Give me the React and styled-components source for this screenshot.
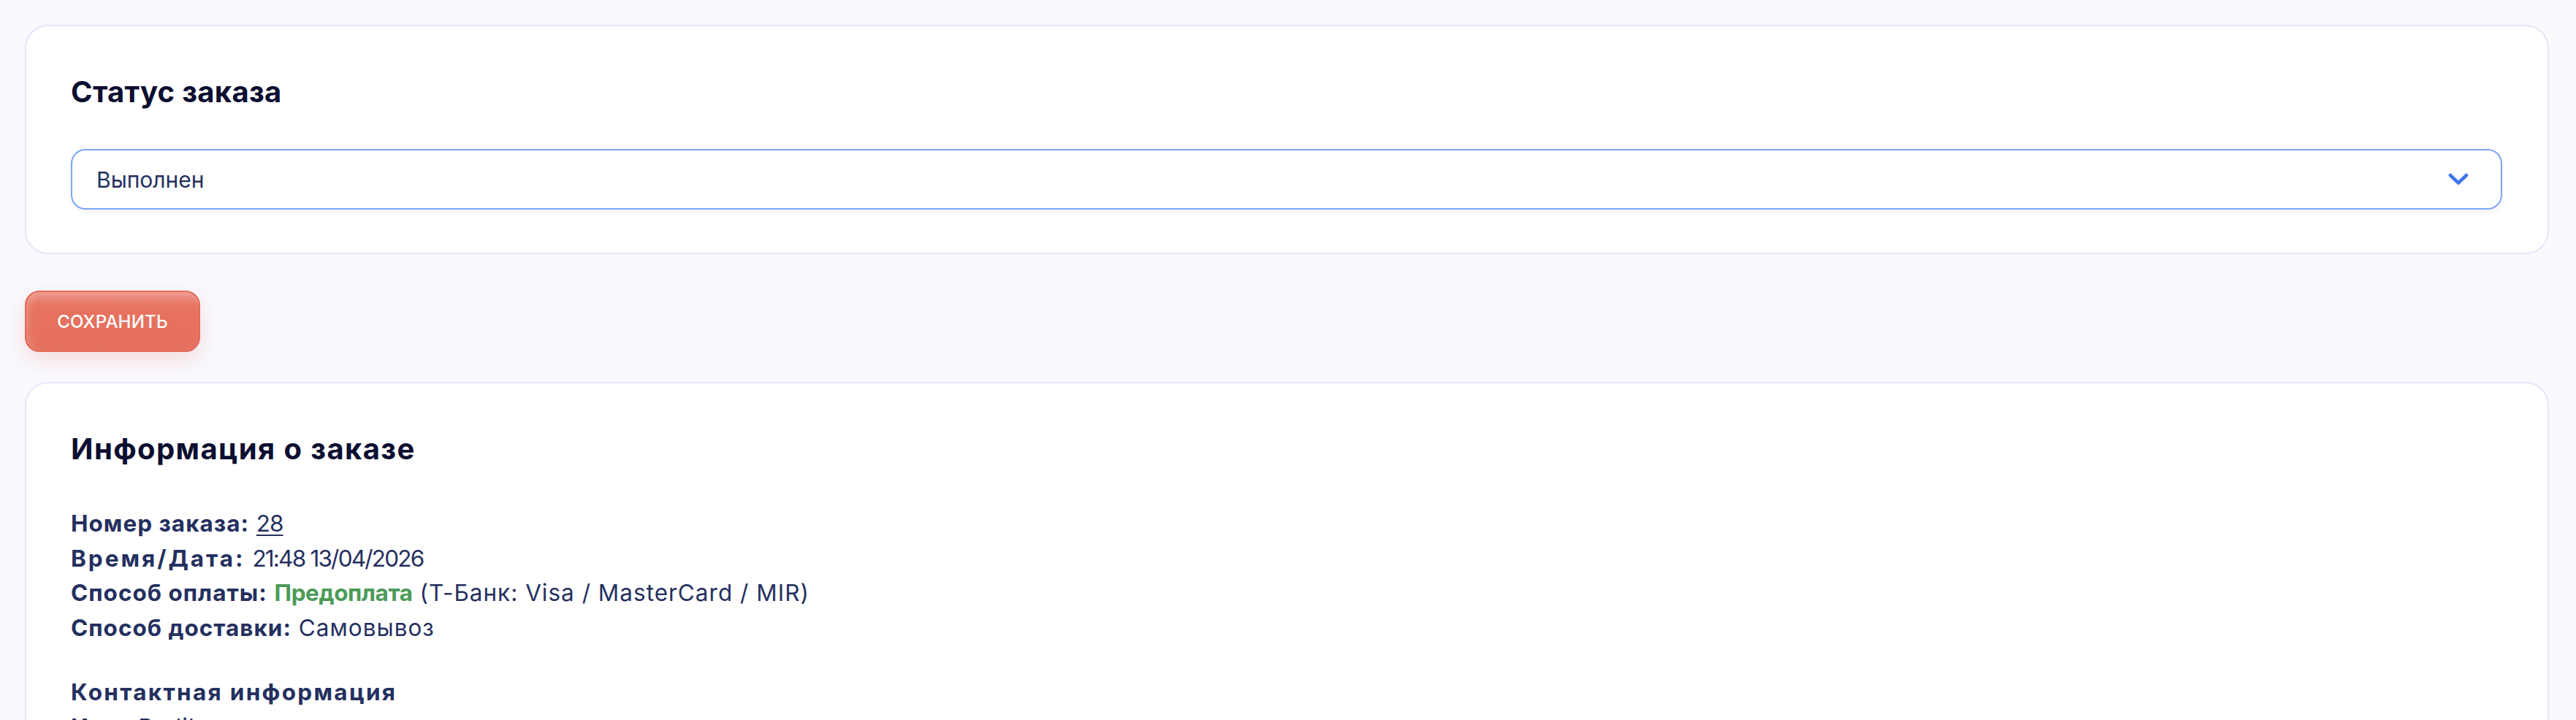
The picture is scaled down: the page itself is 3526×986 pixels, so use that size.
import React from 'react'
import styled, { createGlobalStyle } from 'styled-components'

const GlobalStyle = createGlobalStyle`
  html, body {
    margin: 0;
    padding: 0;
    background: #f9f9fe;
    font-family: Inter, "Open Sans", "DejaVu Sans", sans-serif;
    color: #25305f;
  }
  * { box-sizing: border-box; }
`

const Page = styled.div`
  padding: 34px 37px 0 34px;
  display: flex;
  flex-direction: column;
  align-items: flex-start;
`

const Card = styled.section`
  width: 100%;
  background: #fff;
  border: 2px solid #e4e6fb;
  border-radius: 32px;
  padding: 66px 62px 59px 61px;
`

const Title = styled.h2`
  margin: 0;
  font-size: 40px;
  line-height: 48px;
  font-weight: 700;
  letter-spacing: ${p => p.$spacing || '0.6px'};
  color: #0c0e30;
`

const SelectBox = styled.div`
  margin-top: 54px;
  height: 83px;
  border: 2px solid #7ea5f2;
  border-radius: 20px;
  box-shadow: 0 3px 6px rgba(30, 40, 90, 0.06);
  display: flex;
  align-items: center;
  justify-content: space-between;
  padding: 0 44px 0 33px;
  font-size: 30px;
  line-height: 36px;
  color: #25305f;
`

const Chevron = () => (
  <svg width="28" height="17" viewBox="0 0 28 17" fill="none">
    <path d="M3 3 L14 13.5 L25 3" stroke="#3f74e9" strokeWidth="4.6" strokeLinecap="round" strokeLinejoin="round" />
  </svg>
)

const SaveButton = styled.button`
  margin: 50px 0 41px;
  width: 240px;
  height: 84px;
  border-radius: 20px;
  border: 2px solid #e36b5a;
  background: linear-gradient(180deg, #ec8e80 0%, #e6725f 28%, #e5705e 100%);
  box-shadow: inset 4px 4px 10px rgba(255, 255, 255, 0.18), 0 10px 28px rgba(229, 112, 95, 0.22);
  color: #fff;
  font-family: inherit;
  font-size: 24px;
  line-height: 29px;
  font-weight: 500;
  letter-spacing: 0.2px;
  text-transform: uppercase;
  padding: 0;
  cursor: pointer;
`

const InfoList = styled.div`
  margin-top: 54px;
  font-size: 31.5px;
  line-height: 47.5px;
  letter-spacing: 1px;
  color: #25305f;
`

const Line = styled.div`
  white-space: nowrap;
`

const Label = styled.b`
  font-weight: 700;
  letter-spacing: ${p => p.$spacing || '1px'};
`

const Digits = styled.span`
  letter-spacing: -1.8px;
`

const Num = styled.a`
  color: inherit;
  letter-spacing: -1px;
  text-decoration: underline;
  text-underline-offset: 4px;
  text-decoration-thickness: 2px;
`

const Paid = styled.b`
  font-weight: 700;
  letter-spacing: -0.4px;
  color: #4b9b57;
`

const SubHeading = styled.div`
  margin-top: 41px;
  font-weight: 700;
  letter-spacing: 2.3px;
`

export default function App() {
  return (
    <>
      <GlobalStyle />
      <Page>
        <Card>
          <Title $spacing="0.3px">Статус заказа</Title>
          <SelectBox>
            <span>Выполнен</span>
            <Chevron />
          </SelectBox>
        </Card>

        <SaveButton>Сохранить</SaveButton>

        <Card>
          <Title $spacing="1.4px">Информация о заказе</Title>
          <InfoList>
            <Line><Label>Номер заказа:</Label> <Num href="#">28</Num></Line>
            <Line><Label $spacing="3px">Время/Дата:</Label> <Digits>21:48 13/04/2026</Digits></Line>
            <Line><Label>Способ оплаты:</Label> <Paid>Предоплата</Paid> (Т-Банк: Visa / MasterCard / MIR)</Line>
            <Line><Label>Способ доставки:</Label> Самовывоз</Line>
            <SubHeading>Контактная информация</SubHeading>
            <Line><Label>Имя:</Label> Radik</Line>
          </InfoList>
        </Card>
      </Page>
    </>
  )
}
